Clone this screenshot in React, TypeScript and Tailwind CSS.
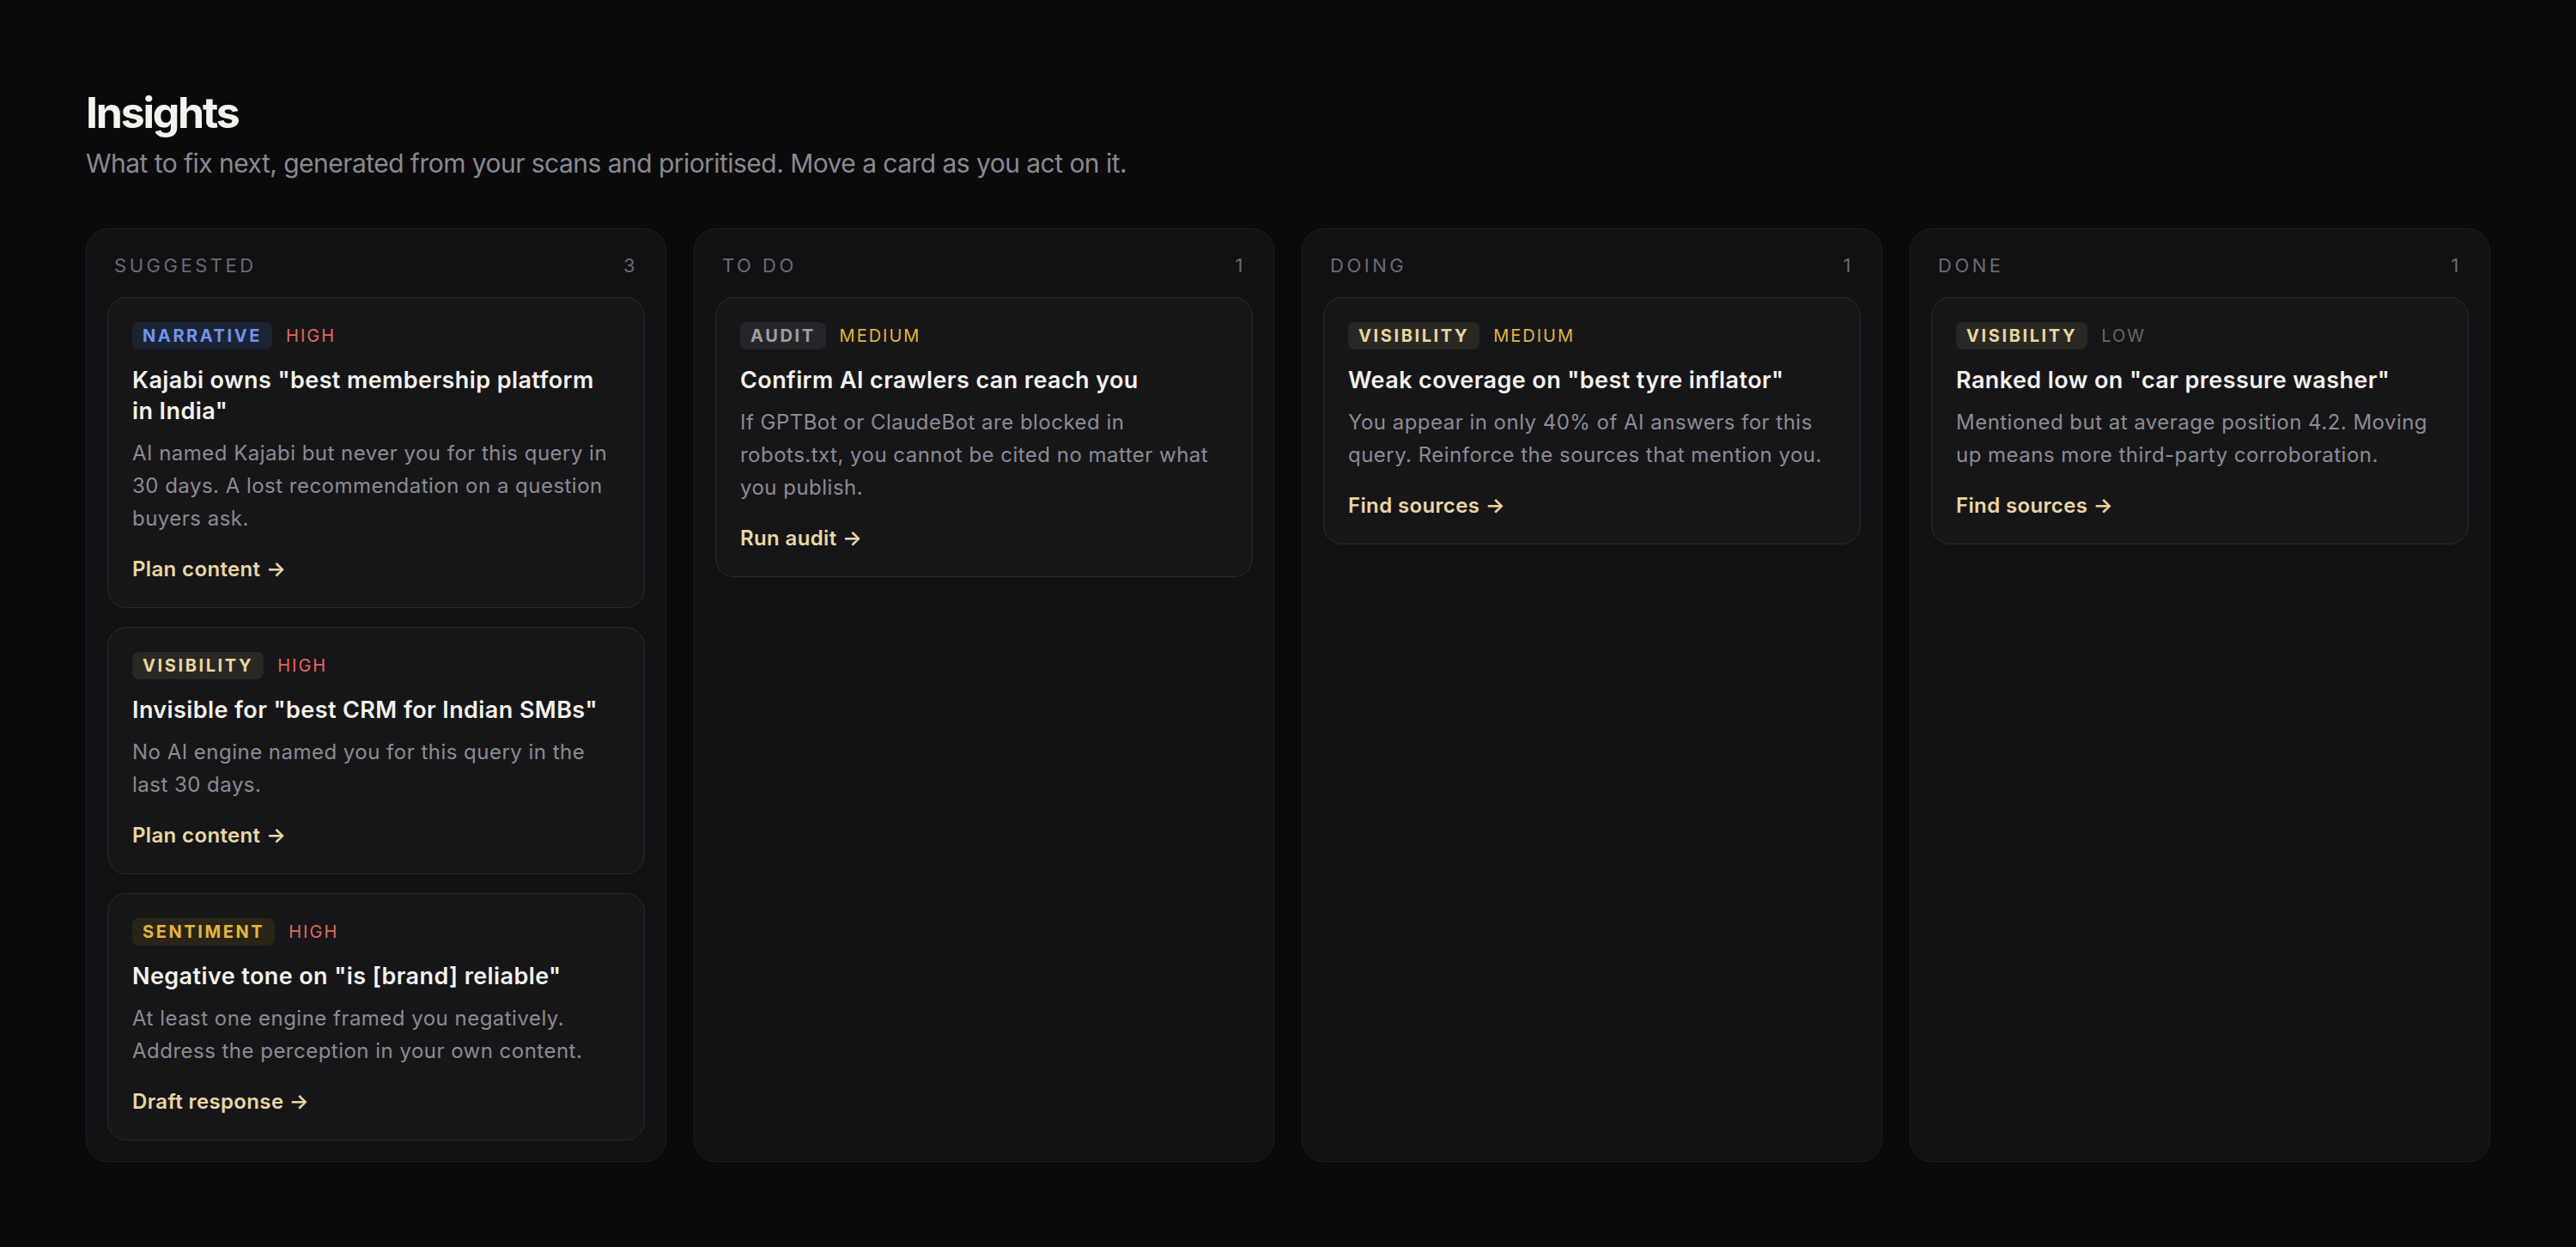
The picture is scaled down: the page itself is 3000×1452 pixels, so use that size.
type Tone = "blue" | "cream" | "gold" | "gray";
type Level = "HIGH" | "MEDIUM" | "LOW";

type Insight = {
  tag: string;
  tone: Tone;
  level: Level;
  title: string;
  body: string;
  action: string;
};

type Lane = {
  name: string;
  items: Insight[];
};

const tagStyles: Record<Tone, string> = {
  blue: "bg-[#1c2333] text-[#6f94f2]",
  cream: "bg-[#2a2823] text-[#e9d6a2]",
  gold: "bg-[#2a2416] text-[#e2b53e]",
  gray: "bg-[#26262a] text-[#9e9ea6]",
};

const levelStyles: Record<Level, string> = {
  HIGH: "text-[#e0695b]",
  MEDIUM: "text-[#e3b43c]",
  LOW: "text-[#66666e]",
};

const lanes: Lane[] = [
  {
    name: "Suggested",
    items: [
      {
        tag: "Narrative",
        tone: "blue",
        level: "HIGH",
        title: 'Kajabi owns "best membership platform in India"',
        body: "AI named Kajabi but never you for this query in 30 days. A lost recommendation on a question buyers ask.",
        action: "Plan content",
      },
      {
        tag: "Visibility",
        tone: "cream",
        level: "HIGH",
        title: 'Invisible for "best CRM for Indian SMBs"',
        body: "No AI engine named you for this query in the last 30 days.",
        action: "Plan content",
      },
      {
        tag: "Sentiment",
        tone: "gold",
        level: "HIGH",
        title: 'Negative tone on "is [brand] reliable"',
        body: "At least one engine framed you negatively. Address the perception in your own content.",
        action: "Draft response",
      },
    ],
  },
  {
    name: "To do",
    items: [
      {
        tag: "Audit",
        tone: "gray",
        level: "MEDIUM",
        title: "Confirm AI crawlers can reach you",
        body: "If GPTBot or ClaudeBot are blocked in robots.txt, you cannot be cited no matter what you publish.",
        action: "Run audit",
      },
    ],
  },
  {
    name: "Doing",
    items: [
      {
        tag: "Visibility",
        tone: "cream",
        level: "MEDIUM",
        title: 'Weak coverage on "best tyre inflator"',
        body: "You appear in only 40% of AI answers for this query. Reinforce the sources that mention you.",
        action: "Find sources",
      },
    ],
  },
  {
    name: "Done",
    items: [
      {
        tag: "Visibility",
        tone: "cream",
        level: "LOW",
        title: 'Ranked low on "car pressure washer"',
        body: "Mentioned but at average position 4.2. Moving up means more third-party corroboration.",
        action: "Find sources",
      },
    ],
  },
];

function InsightCard({ item }: { item: Insight }) {
  return (
    <div className="rounded-[22px] border border-[#2a2a2e] bg-[#161619] p-7">
      <div className="flex h-8 items-center gap-4">
        <span
          className={`flex h-8 items-center rounded-lg px-3 text-[20px] font-bold uppercase tracking-[0.13em] ${tagStyles[item.tone]}`}
        >
          {item.tag}
        </span>
        <span className={`text-[20px] font-normal tracking-[0.1em] ${levelStyles[item.level]}`}>
          {item.level}
        </span>
      </div>
      <h3 className="mt-[18px] text-[27px] font-semibold leading-9 tracking-[0.015em] text-[#f4f2ec]">
        {item.title}
      </h3>
      <p className="mt-3 text-[24px] leading-[38px] tracking-[0.02em] text-[#8c8b94]">{item.body}</p>
      <a
        href="#"
        className="mt-6 block text-[24px] font-semibold leading-8 tracking-[0.015em] text-[#ead7a4]"
      >
        {item.action} →
      </a>
    </div>
  );
}

function LaneColumn({ lane }: { lane: Lane }) {
  return (
    <section className="flex flex-col rounded-[26px] border border-[#1f1f23] bg-[#111114] p-6">
      <header className="mb-[19px] flex items-center justify-between px-2 text-[22px] uppercase leading-9 tracking-[0.16em] text-[#6b6b73]">
        <span>{lane.name}</span>
        <span>{lane.items.length}</span>
      </header>
      <div className="flex flex-col gap-[22px]">
        {lane.items.map((item) => (
          <InsightCard key={item.title} item={item} />
        ))}
      </div>
    </section>
  );
}

export default function App() {
  return (
    <main
      className="min-h-screen bg-[#0a0a0c] px-[100px] pt-[100px] pb-24 antialiased"
      style={{ fontFamily: "Inter, 'Noto Sans', sans-serif" }}
    >
      <h1 className="text-[50px] font-bold leading-[62px] tracking-[-0.045em] text-[#f5f3ee]">Insights</h1>
      <p className="mt-2 text-[30px] leading-10 tracking-[-0.018em] text-[#8a8991]">
        What to fix next, generated from your scans and prioritised. Move a card as you act on it.
      </p>
      <div className="mt-14 grid grid-cols-4 gap-8">
        {lanes.map((lane) => (
          <LaneColumn key={lane.name} lane={lane} />
        ))}
      </div>
    </main>
  );
}
